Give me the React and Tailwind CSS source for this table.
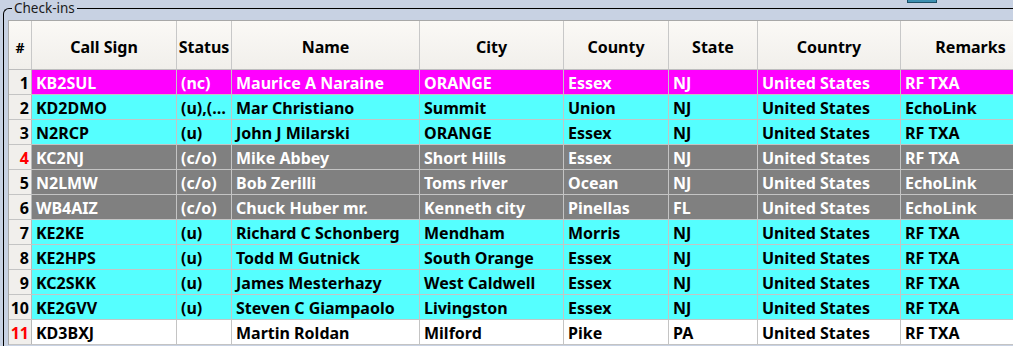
import React from "react";

const rows = [
  { n: "1", bg: "bg-[#ff00ff]", fg: "text-white", cells: ["KB2SUL", "(nc)", "Maurice A Naraine", "ORANGE", "Essex", "NJ", "United States", "RF TXA"] },
  { n: "2", bg: "bg-[#55ffff]", fg: "text-black", cells: ["KD2DMO", "(u),(…", "Mar Christiano", "Summit", "Union", "NJ", "United States", "EchoLink"] },
  { n: "3", bg: "bg-[#55ffff]", fg: "text-black", cells: ["N2RCP", "(u)", "John J Milarski", "ORANGE", "Essex", "NJ", "United States", "RF TXA"] },
  { n: "4", red: true, bg: "bg-[#808080]", fg: "text-white", cells: ["KC2NJ", "(c/o)", "Mike Abbey", "Short Hills", "Essex", "NJ", "United States", "RF TXA"] },
  { n: "5", bg: "bg-[#808080]", fg: "text-white", cells: ["N2LMW", "(c/o)", "Bob Zerilli", "Toms river", "Ocean", "NJ", "United States", "EchoLink"] },
  { n: "6", bg: "bg-[#808080]", fg: "text-white", cells: ["WB4AIZ", "(c/o)", "Chuck Huber mr.", "Kenneth city", "Pinellas", "FL", "United States", "EchoLink"] },
  { n: "7", bg: "bg-[#55ffff]", fg: "text-black", cells: ["KE2KE", "(u)", "Richard C Schonberg", "Mendham", "Morris", "NJ", "United States", "RF TXA"] },
  { n: "8", bg: "bg-[#55ffff]", fg: "text-black", cells: ["KE2HPS", "(u)", "Todd M Gutnick", "South Orange", "Essex", "NJ", "United States", "RF TXA"] },
  { n: "9", bg: "bg-[#55ffff]", fg: "text-black", cells: ["KC2SKK", "(u)", "James Mesterhazy", "West Caldwell", "Essex", "NJ", "United States", "RF TXA"] },
  { n: "10", bg: "bg-[#55ffff]", fg: "text-black", cells: ["KE2GVV", "(u)", "Steven C Giampaolo", "Livingston", "Essex", "NJ", "United States", "RF TXA"] },
  { n: "11", red: true, bg: "bg-white", fg: "text-black", cells: ["KD3BXJ", "", "Martin Roldan", "Milford", "Pike", "PA", "United States", "RF TXA"] },
];

const headers = ["Call Sign", "Status", "Name", "City", "County", "State", "Country", "Remarks"];
const widths = ["w-[145px]", "w-[55px]", "w-[188px]", "w-[144px]", "w-[105px]", "w-[89px]", "w-[143px]", "w-[140px]"];

export default function App() {
  return (
    <div
      className="relative w-[1013px] h-[346px] overflow-hidden bg-[#c8d2e3] pt-[8px] pl-[3px]"
      style={{ fontFamily: '"Noto Sans", "Open Sans", sans-serif' }}
    >
      <div className="absolute top-0 left-[907px] w-[30px] h-[3px] bg-[#3c8fb0] border-x border-b border-[#1d4f66]" />
      <div className="absolute top-[1px] left-[12px] px-[2px] bg-[#c8d2e3] text-[13.5px] leading-[15px] text-[#1a1a1a]">
        Check-ins
      </div>
      <div className="h-full border-t border-l border-black rounded-tl-[6px] pt-[11px] pl-[4px]">
        <div className="w-[1200px] border-t border-l border-[#a8a8a8] text-[16px] font-bold">
          <div className="flex h-[49px] border-b border-[#bdbdbd] bg-gradient-to-b from-[#fbf9f6] to-[#f1efeb] text-black">
            <div className="w-[23px] shrink-0 border-r border-[#c8c8c8] flex items-center justify-center pt-[5px] text-[14px]">#</div>
            {headers.map((h, i) => (
              <div key={h} className={`${widths[i]} shrink-0 border-r border-[#c8c8c8] flex items-center justify-center pt-[4px]`}>
                {h}
              </div>
            ))}
          </div>
          {rows.map((r) => (
            <div key={r.n} className="flex h-[25px] border-b border-[#c4c4c4]">
              <div
                className={`w-[23px] shrink-0 border-r border-[#b8b8b8] bg-[#f1efec] flex items-center justify-end pr-[2px] pt-[1px] ${r.red ? "text-[#ff0000]" : "text-black"}`}
              >
                {r.n}
              </div>
              {r.cells.map((c, i) => (
                <div
                  key={i}
                  className={`${widths[i]} shrink-0 border-r border-[#c4c4c4] ${r.bg} ${r.fg} flex items-center pl-[4px] pt-[1px] whitespace-nowrap overflow-hidden`}
                >
                  {c}
                </div>
              ))}
            </div>
          ))}
        </div>
      </div>
    </div>
  );
}
